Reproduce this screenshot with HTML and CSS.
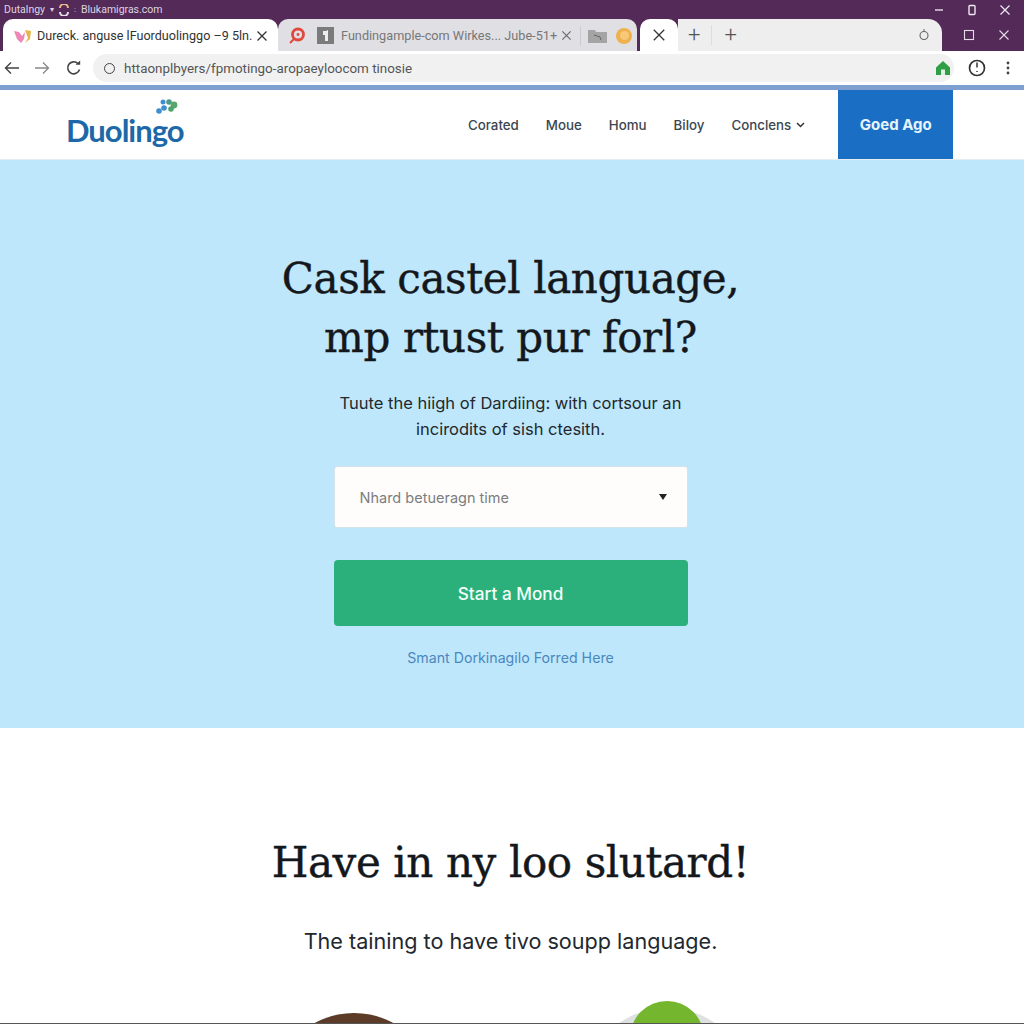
FILE: index.html
```html
<!DOCTYPE html>
<html lang="en">
<head>
  <meta charset="UTF-8">
  <title>Duolingo</title>
  <link rel="stylesheet" href="styles.css">
</head>
<body>
  <div class="title-bar">
    <div class="title-left">
      <span>Dutalngy</span>
      <span class="title-caret">▾</span>
      <svg class="title-icon" width="10" height="12" viewBox="0 0 10 12"><path d="M1 4a4 4 0 0 1 8 0" fill="none" stroke="#e8b98a" stroke-width="2"/><path d="M9 8a4 4 0 0 1-8 0" fill="none" stroke="#e6e0ea" stroke-width="2"/></svg>
      <span class="title-caret">:</span>
      <span>Blukamigras.com</span>
    </div>
    <div class="window-btns">
      <svg width="12" height="12" viewBox="0 0 12 12"><path d="M2 6h8" stroke="#e9e2ec" stroke-width="1.4"/></svg>
      <svg width="12" height="12" viewBox="0 0 12 12"><rect x="3" y="1.5" width="6" height="9" rx="1" fill="none" stroke="#f0eaf2" stroke-width="1.4"/></svg>
      <svg width="12" height="12" viewBox="0 0 12 12"><path d="M1.5 1.5l9 9M10.5 1.5l-9 9" stroke="#f0eaf2" stroke-width="1.2"/></svg>
    </div>
  </div>

  <div class="tab-row">
    <div class="tab tab-active">
      <svg width="20" height="16" viewBox="0 0 20 16"><path d="M1 3l5 1 3 4 3-4-1 7-3 4-4-4z" fill="#ee86b8"/><path d="M12 2l6 1-1 8-5 4 3-5z" fill="#e6b64c"/></svg>
      <span class="tab-text">Dureck. anguse lFuorduolinggo –9 5ln.</span>
      <svg class="close" width="12" height="12" viewBox="0 0 12 12"><path d="M1.5 1.5l9 9M10.5 1.5l-9 9" stroke="#333" stroke-width="1.3"/></svg>
    </div>
    <div class="tab tab-back">
      <svg width="18" height="18" viewBox="0 0 18 18"><circle cx="10" cy="7.500" r="5.500" fill="none" stroke="#e0483e" stroke-width="2.800"/><circle cx="10" cy="7.500" r="1.400" fill="#e0483e"/><path d="M6 12l-4 4" stroke="#e0483e" stroke-width="2"/></svg>
      <svg class="page-icon" width="17" height="17" viewBox="0 0 17 17"><rect width="17" height="17" fill="#7b7b7b"/><path d="M6 4h3l2-1v11H8V8H6z" fill="#eee"/></svg>
      <span class="tab-text back-text">Fundingample-com Wirkes... Jube-51+</span>
      <svg class="close" width="11" height="11" viewBox="0 0 12 12"><path d="M1.5 1.5l9 9M10.5 1.5l-9 9" stroke="#666" stroke-width="1.2"/></svg>
      <span class="divider"></span>
      <svg class="folder" width="19" height="14" viewBox="0 0 19 14"><path d="M0 1h7l1 2h11v11H0z" fill="#a4a4a4"/><path d="M6 6l6 2 1 3" stroke="#666" fill="none"/></svg>
      <span class="emoji-dot"><span></span></span>
    </div>
    <div class="tab-mini">
      <svg width="14" height="14" viewBox="0 0 12 12"><path d="M1.5 1.5l9 9M10.5 1.5l-9 9" stroke="#333" stroke-width="1.1"/></svg>
    </div>
    <div class="tab-rest">
      <span class="plus plus-first">+</span>
      <span class="plus-sep"></span>
      <span class="plus">+</span>
      <svg class="rest-icon" width="12" height="12" viewBox="0 0 12 12"><circle cx="6" cy="6.5" r="4" fill="none" stroke="#666" stroke-width="1.1"/><path d="M6 0v3" stroke="#666"/></svg>
    </div>
    <div class="tab-win">
      <svg width="12" height="12" viewBox="0 0 12 12"><rect x="1.5" y="1.5" width="9" height="9" fill="none" stroke="#e4dde7" stroke-width="1.1"/></svg>
      <svg width="12" height="12" viewBox="0 0 12 12"><path d="M1.5 1.5l9 9M10.5 1.5l-9 9" stroke="#e4dde7" stroke-width="1.1"/></svg>
    </div>
  </div>

  <div class="toolbar">
    <svg width="16" height="14" viewBox="0 0 16 14"><path d="M15 7H2M7 1.5L1.5 7 7 12.5" fill="none" stroke="#444" stroke-width="1.4"/></svg>
    <svg class="nav-fwd" width="16" height="14" viewBox="0 0 16 14"><path d="M1 7h13M9 1.5L14.500 7 9 12.500" fill="none" stroke="#888" stroke-width="1.3"/></svg>
    <svg class="nav-reload" width="16" height="16" viewBox="0 0 16 16"><path d="M13.500 9.500A6 6 0 1 1 12 3.600" fill="none" stroke="#444" stroke-width="1.600"/><path d="M9.500 4.800h4.700V0.500z" fill="#444"/></svg>
    <div class="address">
      <span class="addr-dot"></span>
      <span class="addr-text">httaonplbyers/fpmotingo-aropaeyloocom tinosie</span>
      <svg class="addr-home" width="16" height="16" viewBox="0 0 16 16"><path d="M8 1l7 6.500V15H1V7.500z" fill="#2f9e44"/><rect x="6" y="9.500" width="4" height="5.500" fill="#dff1e2"/></svg>
    </div>
    <svg class="tool-clock" width="18" height="18" viewBox="0 0 18 18"><circle cx="9" cy="9" r="7.500" fill="none" stroke="#333" stroke-width="1.700"/><path d="M9 3.500v5M9 12v1" stroke="#333" stroke-width="1.500"/></svg>
    <svg class="tool-more" width="4" height="14" viewBox="0 0 4 14"><circle cx="2" cy="2" r="1.400" fill="#444"/><circle cx="2" cy="7" r="1.400" fill="#444"/><circle cx="2" cy="12" r="1.400" fill="#444"/></svg>
  </div>
  <div class="page-edge"></div>

  <header class="site-header">
    <div class="logo">
      <svg class="logo-mark" width="22" height="15" viewBox="0 0 22 15"><circle cx="3" cy="12" r="2.800" fill="#3f8fd0"/><circle cx="8" cy="9" r="2.800" fill="#3f8fd0"/><circle cx="7" cy="3" r="2.500" fill="#3f8fd0"/><circle cx="13" cy="3" r="2.800" fill="#4c9c84"/><circle cx="18" cy="6" r="3.400" fill="#58a86a"/><circle cx="15" cy="10" r="2.800" fill="#4ea36c"/></svg>
      <span class="logo-text">Duolingo</span>
    </div>
    <nav class="site-nav">
      <a>Corated</a>
      <a>Moue</a>
      <a>Homu</a>
      <a>Biloy</a>
      <a class="nav-drop">Conclens
        <svg width="9" height="6" viewBox="0 0 9 6"><path d="M1 1l3.500 3.500L8 1" fill="none" stroke="#333" stroke-width="1.500"/></svg>
      </a>
    </nav>
    <a class="cta">Goed Ago</a>
  </header>

  <section class="hero">
    <h1>Cask castel language,<br>mp rtust pur forl?</h1>
    <p class="hero-sub">Tuute the hiigh of Dardiing: with cortsour an<br>incirodits of sish ctesith.</p>
    <div class="select-box">
      <span>Nhard betueragn time</span>
      <span class="select-arrow"></span>
    </div>
    <button class="start-btn">Start a Mond</button>
    <a class="hero-link">Smant Dorkinagilo Forred Here</a>
  </section>

  <section class="second">
    <h2>Have in ny loo slutard!</h2>
    <p class="second-sub">The taining to have tivo soupp language.</p>
    <div class="faces">
      <div class="face-brown"></div>
      <div class="face-green"></div>
    </div>
  </section>
</body>
</html>
```
FILE: styles.css
```css
* {
  box-sizing: border-box;
}

html, body {
  height: 1024px;
}

body {
  margin: 0;
  overflow: hidden;
  background: #fff;
  font-family: 'Inter', 'Roboto', sans-serif;
  color: #333;
}

svg {
  display: block;
  flex-shrink: 0;
}

/* browser chrome */
.title-bar {
  height: 19px;
  background: #532a58;
  display: flex;
  justify-content: space-between;
  align-items: center;
  padding: 0 13px 0 4px;
  color: #ddd4e0;
  font-size: 10.5px;
  font-family: 'Roboto', sans-serif;
}

.title-left {
  display: flex;
  align-items: center;
  gap: 5px;
}

.title-caret {
  font-size: 8px;
}

.window-btns {
  display: flex;
  gap: 21px;
}

.tab-row {
  height: 32px;
  background: #532a58;
  display: flex;
  align-items: stretch;
  padding-left: 3px;
  font-family: 'Roboto', sans-serif;
}

.tab {
  display: flex;
  align-items: center;
  border-radius: 10px 10px 0 0;
  font-size: 13px;
}

.tab-active {
  width: 275px;
  background: #fff;
  padding: 1px 13px 0 10px;
  gap: 4px;
  color: #333;
  font-size: 12.6px;
}

.tab-text {
  white-space: nowrap;
}

.tab-active .close {
  margin-left: auto;
}

.tab-back {
  width: 359px;
  background: #e0dfe4;
  padding: 1px 0 0 10px;
  color: #777;
  font-size: 12.7px;
}

.page-icon {
  margin-left: 11px;
}

.back-text {
  margin-left: 7px;
  width: 215px;
}

.tab-back .close {
  margin-left: 5px;
}

.divider {
  width: 1px;
  height: 20px;
  background: #ccc;
  margin-left: 8px;
}

.folder {
  margin-left: 7px;
}

.emoji-dot {
  width: 16px;
  height: 16px;
  border-radius: 50%;
  background: #efb04e;
  margin-left: 9px;
  display: flex;
  align-items: center;
  justify-content: center;
}

.emoji-dot span {
  width: 9px;
  height: 9px;
  border-radius: 50%;
  background: #f6c878;
}

.tab-mini {
  width: 38px;
  background: #fff;
  border-radius: 10px 10px 0 0;
  margin-left: 3px;
  display: flex;
  align-items: center;
  justify-content: center;
}

.tab-rest {
  width: 264px;
  background: #eeeeee;
  border-radius: 0 14px 0 0;
  display: flex;
  align-items: center;
  color: #555;
  padding-right: 12px;
}

.plus {
  font-size: 22px;
  font-weight: 300;
  line-height: 1;
}

.plus-first {
  margin-left: 10px;
}

.plus-sep {
  width: 1px;
  height: 20px;
  background: #ddd;
  margin: 0 12px 0 11px;
}

.rest-icon {
  margin-left: auto;
}

.tab-win {
  flex: 1;
  display: flex;
  align-items: center;
  justify-content: space-between;
  padding: 0 14px 0 21px;
}

.toolbar {
  height: 34px;
  background: #fff;
  display: flex;
  align-items: center;
  padding: 0 14px 0 4px;
  font-family: 'Roboto', sans-serif;
}

.nav-fwd {
  margin-left: 14px;
}

.nav-reload {
  margin-left: 16px;
}

.address {
  width: 864px;
  height: 28px;
  margin-left: 11px;
  background: #f1f1f2;
  border-radius: 14px;
  display: flex;
  align-items: center;
  padding: 0 3px 0 11px;
  font-size: 13.4px;
  color: #555;
}

.addr-dot {
  width: 11px;
  height: 11px;
  border: 1.5px solid #444;
  border-radius: 50%;
}

.addr-text {
  margin-left: 9px;
  white-space: nowrap;
}

.addr-home {
  margin-left: auto;
}

.tool-clock {
  margin-left: 14px;
}

.tool-more {
  margin-left: 20px;
}

.page-edge {
  height: 5px;
  background: #7f9fd0;
}

/* site header */
.site-header {
  height: 70px;
  display: flex;
  align-items: stretch;
  padding-left: 66px;
  background: #fff;
  border-bottom: 1px solid #e4eef2;
}

.logo {
  width: 118px;
  display: flex;
  flex-direction: column;
  align-items: flex-end;
  padding-top: 9px;
}

.logo-mark {
  margin-right: 6px;
}

.logo-text {
  font-family: 'Lato', sans-serif;
  font-weight: 700;
  font-size: 31px;
  line-height: 32px;
  letter-spacing: -1px;
  color: #1c68a8;
  width: 118px;
}

.site-nav {
  display: flex;
  align-items: center;
  margin-left: 284px;
  gap: 27px;
  font-size: 13.3px;
  font-weight: 500;
  color: #3c4650;
}

.nav-drop {
  display: flex;
  align-items: center;
  gap: 5px;
}

.cta {
  width: 115px;
  margin-left: 33px;
  background: #1a6fc5;
  color: #e6f4fc;
  font-weight: 700;
  font-size: 15px;
  display: flex;
  align-items: center;
  justify-content: center;
}

/* hero */
.hero {
  height: 568px;
  background: #bfe7fb;
  display: flex;
  flex-direction: column;
  align-items: center;
  padding: 89px 3px 0 0;
}

h1, h2 {
  margin: 0;
  font-family: 'DejaVu Serif', serif;
  font-weight: 400;
  text-align: center;
  color: #14181c;
  -webkit-text-stroke: 0.4px #14181c;
}

h1 {
  font-size: 42px;
  line-height: 59px;
  letter-spacing: -0.4px;
}

.hero-sub {
  margin: 23px 0 0;
  font-size: 16.5px;
  line-height: 26px;
  text-align: center;
  color: #22282e;
}

.select-box {
  width: 354px;
  height: 62px;
  margin-top: 24px;
  background: #fffdfb;
  border: 1px solid #d5e2ea;
  border-radius: 3px;
  display: flex;
  align-items: center;
  justify-content: space-between;
  padding: 0 20px 0 25px;
  font-size: 14.5px;
  color: #7b7d80;
}

.select-arrow {
  width: 0;
  height: 0;
  border-left: 4.5px solid transparent;
  border-right: 4.5px solid transparent;
  border-top: 6px solid #222;
}

.start-btn {
  width: 354px;
  height: 66px;
  margin-top: 32px;
  background: #2bb07c;
  border: none;
  border-radius: 4px;
  color: #f2fff8;
  font-family: inherit;
  font-size: 17.2px;
  font-weight: 500;
}

.hero-link {
  margin-top: 23px;
  font-size: 14.2px;
  color: #4a88c0;
}

/* second section */
.second {
  height: 296px;
  display: flex;
  flex-direction: column;
  align-items: center;
  padding: 106px 3px 0 0;
  overflow: hidden;
  border-bottom: 1px solid #555;
}

h2 {
  font-size: 42px;
  line-height: 58px;
  letter-spacing: -0.4px;
}

.second-sub {
  margin: 34px 0 0;
  font-size: 21.6px;
  line-height: 30px;
  color: #22282e;
}

.faces {
  align-self: flex-start;
  margin-left: 272px;
  margin-top: 45px;
  display: flex;
  align-items: flex-start;
  gap: 194px;
}

.face-brown {
  width: 164px;
  height: 164px;
  margin-top: 12px;
  border-radius: 50%;
  background: #5c3c28;
}

.face-green {
  width: 74px;
  height: 74px;
  border-radius: 50%;
  background: #74b62e;
  box-shadow: 0 53px 0 46px #dfe1e1;
}
```
